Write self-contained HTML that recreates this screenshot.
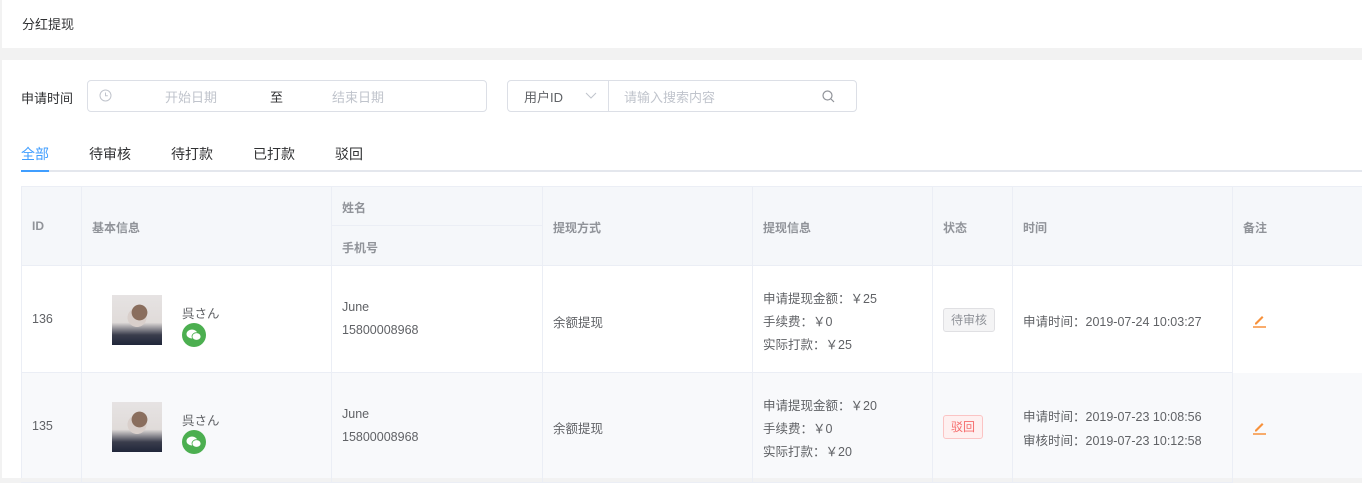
<!DOCTYPE html>
<html><head><meta charset="utf-8"><style>
*{margin:0;padding:0;box-sizing:border-box}
body{width:1362px;height:478px;overflow:hidden;background:#f2f2f2;font-family:"Liberation Sans","Noto Sans CJK SC",sans-serif;color:#606266;position:relative}
.a{position:absolute;white-space:nowrap}
.hd{position:absolute;left:2px;top:0;width:1360px;height:48px;background:#fff}
.ct{position:absolute;left:2px;top:60px;width:1360px;height:418px;background:#fff}
.box{position:absolute;border:1px solid #dcdfe6;border-radius:4px;background:#fff}
.ph{color:#c0c4cc;font-size:13px}
.tab{font-size:14px;color:#303133;top:144px}
.th{background:#f5f7fa;color:#909399;font-size:12px;font-weight:bold}
.cell{position:absolute;border-right:1px solid #ebeef5;border-bottom:1px solid #ebeef5}
.t{font-size:12.5px;color:#606266}
.av{position:absolute;width:50px;height:50px;background:radial-gradient(circle at 55% 35%,#8a6e5e 0 18%,transparent 19%),radial-gradient(circle at 50% 45%,#d9cfcb 0 25%,transparent 26%),linear-gradient(180deg,#e6e3e3 0%,#e0dbd9 55%,#3a3d4c 80%,#20263a 100%)}
.wx{position:absolute;width:24px;height:24px;border-radius:50%;background:#4caf50}
.tag{position:absolute;font-size:12px;height:24px;line-height:22px;padding:0 7px;border-radius:3px}
</style></head><body>
<div class="hd"><div class="a" style="left:20px;top:14px;font-size:13px;color:#303133">分红提现</div></div>
<div class="ct"></div>
<div class="a" style="left:21px;top:88px;font-size:13px;color:#303133">申请时间</div>
<div class="box" style="left:87px;top:80px;width:400px;height:32px"></div>
<svg class="a" style="left:99px;top:89px" width="13" height="13" viewBox="0 0 13 13"><circle cx="6.5" cy="6.5" r="5.5" fill="none" stroke="#c0c4cc"/><path d="M6.5 3.5v3.2h2.3" fill="none" stroke="#c0c4cc"/></svg>
<div class="a ph" style="left:165px;top:87px">开始日期</div>
<div class="a" style="left:270px;top:87px;font-size:13px;color:#303133">至</div>
<div class="a ph" style="left:332px;top:87px">结束日期</div>
<div class="box" style="left:507px;top:80px;width:350px;height:32px"></div>
<div class="a" style="left:608px;top:81px;width:1px;height:30px;background:#dcdfe6"></div>
<div class="a" style="left:524px;top:87px;font-size:13px;color:#606266">用户ID</div>
<svg class="a" style="left:585px;top:92px" width="12" height="8"><path d="M1 1l5 5 5-5" fill="none" stroke="#c0c4cc"/></svg>
<div class="a ph" style="left:624px;top:87px">请输入搜索内容</div>
<svg class="a" style="left:822px;top:90px" width="13" height="13"><circle cx="5.5" cy="5.5" r="4.5" fill="none" stroke="#909399" stroke-width="1.2"/><path d="M9 9l3 3" stroke="#909399" stroke-width="1.2"/></svg>
<div class="a tab" style="left:21px;color:#409eff">全部</div>
<div class="a tab" style="left:89px">待审核</div>
<div class="a tab" style="left:171px">待打款</div>
<div class="a tab" style="left:253px">已打款</div>
<div class="a tab" style="left:335px">驳回</div>
<div class="a" style="left:21px;top:170px;width:1341px;height:2px;background:#e4e7ed"></div>
<div class="a" style="left:21px;top:170px;width:28px;height:2px;background:#409eff"></div>
<div class="a th" style="left:21px;top:186px;width:1341px;height:80px;border-left:1px solid #ebeef5;border-top:1px solid #ebeef5"></div>
<div class="cell" style="left:21px;top:186px;width:61px;height:80px"></div>
<div class="cell" style="left:82px;top:186px;width:250px;height:80px"></div>
<div class="cell" style="left:332px;top:186px;width:211px;height:40px"></div>
<div class="cell" style="left:332px;top:226px;width:211px;height:40px"></div>
<div class="cell" style="left:543px;top:186px;width:210px;height:80px"></div>
<div class="cell" style="left:753px;top:186px;width:180px;height:80px"></div>
<div class="cell" style="left:933px;top:186px;width:80px;height:80px"></div>
<div class="cell" style="left:1013px;top:186px;width:220px;height:80px"></div>
<div class="cell" style="left:1233px;top:186px;width:129px;height:80px;border-right:none"></div>
<div class="a th" style="left:32px;top:219px;background:none">ID</div>
<div class="a th" style="left:92px;top:219px;background:none">基本信息</div>
<div class="a th" style="left:342px;top:199px;background:none">姓名</div>
<div class="a th" style="left:342px;top:239px;background:none">手机号</div>
<div class="a th" style="left:553px;top:219px;background:none">提现方式</div>
<div class="a th" style="left:763px;top:219px;background:none">提现信息</div>
<div class="a th" style="left:943px;top:219px;background:none">状态</div>
<div class="a th" style="left:1023px;top:219px;background:none">时间</div>
<div class="a th" style="left:1243px;top:219px;background:none">备注</div>
<div class="a" style="left:21px;top:266px;width:1341px;height:107px;background:#fff;border-left:1px solid #ebeef5"></div>
<div class="a" style="left:21px;top:373px;width:1341px;height:105px;background:#f8f9fb;border-left:1px solid #ebeef5"></div>
<div class="cell" style="left:21px;top:266px;width:61px;height:107px"></div>
<div class="cell" style="left:82px;top:266px;width:250px;height:107px"></div>
<div class="cell" style="left:332px;top:266px;width:211px;height:107px"></div>
<div class="cell" style="left:543px;top:266px;width:210px;height:107px"></div>
<div class="cell" style="left:753px;top:266px;width:180px;height:107px"></div>
<div class="cell" style="left:933px;top:266px;width:80px;height:107px"></div>
<div class="cell" style="left:1013px;top:266px;width:220px;height:107px"></div>
<div class="cell" style="left:21px;top:373px;width:61px;height:110px"></div>
<div class="cell" style="left:82px;top:373px;width:250px;height:110px"></div>
<div class="cell" style="left:332px;top:373px;width:211px;height:110px"></div>
<div class="cell" style="left:543px;top:373px;width:210px;height:110px"></div>
<div class="cell" style="left:753px;top:373px;width:180px;height:110px"></div>
<div class="cell" style="left:933px;top:373px;width:80px;height:110px"></div>
<div class="cell" style="left:1013px;top:373px;width:220px;height:110px"></div>
<div class="a t" style="left:32px;top:312px">136</div>
<div class="av" style="left:112px;top:295px"></div>
<div class="a t" style="left:182px;top:303px">呉さん</div>
<div class="wx" style="left:182px;top:323px"></div>
<svg class="a" style="left:186px;top:329px" width="16" height="12"><ellipse cx="6" cy="5" rx="5.5" ry="4.5" fill="#fff"/><ellipse cx="10.5" cy="7.5" rx="4.5" ry="3.8" fill="#fff" stroke="#4caf50" stroke-width="0.8"/></svg>
<div class="a t" style="left:342px;top:300px">June</div>
<div class="a t" style="left:342px;top:323px">15800008968</div>
<div class="a t" style="left:553px;top:312px">余额提现</div>
<div class="a t" style="left:763px;top:288px">申请提现金额：￥25</div>
<div class="a t" style="left:763px;top:311px">手续费：￥0</div>
<div class="a t" style="left:763px;top:334px">实际打款：￥25</div>
<div class="tag" style="left:943px;top:308px;background:#f4f4f5;border:1px solid #e0e0e3;color:#909399">待审核</div>
<div class="a t" style="left:1023px;top:311px">申请时间：2019-07-24 10:03:27</div>
<svg class="a" style="left:1252px;top:313px" width="15" height="15"><path d="M3 10l7-7 1.5 1.5-7 7H3z" fill="#f7913b"/><path d="M1 14h13" stroke="#f7913b" stroke-width="1.5"/></svg>
<div class="a t" style="left:32px;top:419px">135</div>
<div class="av" style="left:112px;top:402px"></div>
<div class="a t" style="left:182px;top:410px">呉さん</div>
<div class="wx" style="left:182px;top:430px"></div>
<svg class="a" style="left:186px;top:436px" width="16" height="12"><ellipse cx="6" cy="5" rx="5.5" ry="4.5" fill="#fff"/><ellipse cx="10.5" cy="7.5" rx="4.5" ry="3.8" fill="#fff" stroke="#4caf50" stroke-width="0.8"/></svg>
<div class="a t" style="left:342px;top:407px">June</div>
<div class="a t" style="left:342px;top:430px">15800008968</div>
<div class="a t" style="left:553px;top:418px">余额提现</div>
<div class="a t" style="left:763px;top:395px">申请提现金额：￥20</div>
<div class="a t" style="left:763px;top:418px">手续费：￥0</div>
<div class="a t" style="left:763px;top:441px">实际打款：￥20</div>
<div class="tag" style="left:943px;top:415px;background:#fef0f0;border:1px solid #fbc4c4;color:#f56c6c">驳回</div>
<div class="a t" style="left:1023px;top:406px">申请时间：2019-07-23 10:08:56</div>
<div class="a t" style="left:1023px;top:430px">审核时间：2019-07-23 10:12:58</div>
<svg class="a" style="left:1252px;top:420px" width="15" height="15"><path d="M3 10l7-7 1.5 1.5-7 7H3z" fill="#f7913b"/><path d="M1 14h13" stroke="#f7913b" stroke-width="1.5"/></svg>
</body></html>
